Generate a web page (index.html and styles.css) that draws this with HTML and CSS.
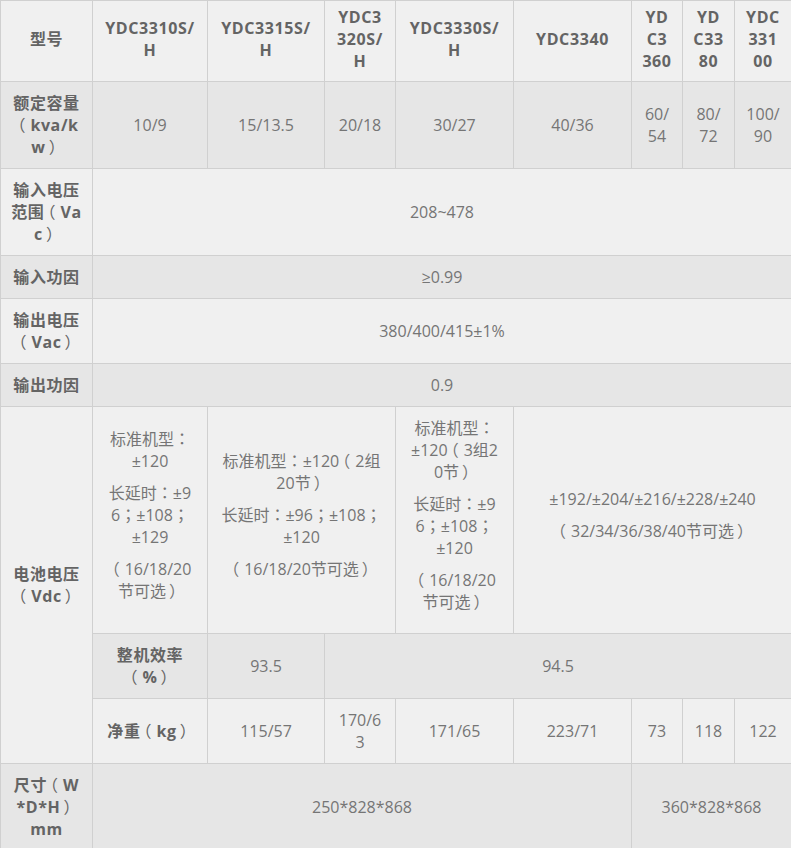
FILE: index.html
```html
<!DOCTYPE html>
<html lang="zh-CN">
<head>
<meta charset="utf-8">
<title>YDC33 系列参数</title>
<link rel="stylesheet" href="styles.css">
</head>
<body>
<table class="spec">
  <colgroup>
    <col class="c0"><col class="c1"><col class="c2"><col class="c3"><col class="c4"><col class="c5"><col class="c6"><col class="c7"><col class="c8">
  </colgroup>
  <tbody>
    <tr class="light rh-head">
      <th>型号</th>
      <th>YDC3310S/<br>H</th>
      <th>YDC3315S/<br>H</th>
      <th>YDC3<br>320S/<br>H</th>
      <th>YDC3330S/<br>H</th>
      <th>YDC3340</th>
      <th>YD<br>C3<br>360</th>
      <th>YD<br>C33<br>80</th>
      <th>YDC<br>331<br>00</th>
    </tr>
    <tr class="dark rh-3">
      <th>额定容量<br><span class="pu op">（</span>kva/k<br>w<span class="pu cp">）</span></th>
      <td>10/9</td>
      <td>15/13.5</td>
      <td>20/18</td>
      <td>30/27</td>
      <td>40/36</td>
      <td>60/<br>54</td>
      <td>80/<br>72</td>
      <td>100/<br>90</td>
    </tr>
    <tr class="light rh-3">
      <th>输入电压<br>范围<span class="pu op">（</span>Va<br>c<span class="pu cp">）</span></th>
      <td colspan="8">208~478</td>
    </tr>
    <tr class="dark rh-1">
      <th>输入功因</th>
      <td colspan="8">≥0.99</td>
    </tr>
    <tr class="light rh-2">
      <th>输出电压<br><span class="pu op">（</span>Vac<span class="pu cp">）</span></th>
      <td colspan="8">380/400/415±1%</td>
    </tr>
    <tr class="dark rh-1">
      <th>输出功因</th>
      <td colspan="8">0.9</td>
    </tr>
    <tr class="light rh-bat">
      <th rowspan="3" class="light">电池电压<br><span class="pu op">（</span>Vdc<span class="pu cp">）</span></th>
      <td>
        <p>标准机型<span class="pu" lang="zh-TW">：</span><br>±120</p>
        <p>长延时<span class="pu" lang="zh-TW">：</span>±9<br>6<span class="pu" lang="zh-TW">；</span>±108<span class="pu" lang="zh-TW">；</span><br>±129</p>
        <p><span class="pu op">（</span>16/18/20<br>节可选<span class="pu cp">）</span></p>
      </td>
      <td colspan="2">
        <p>标准机型<span class="pu" lang="zh-TW">：</span>±120<span class="pu op">（</span>2组<br>20节<span class="pu cp">）</span></p>
        <p>长延时<span class="pu" lang="zh-TW">：</span>±96<span class="pu" lang="zh-TW">；</span>±108<span class="pu" lang="zh-TW">；</span><br>±120</p>
        <p><span class="pu op">（</span>16/18/20节可选<span class="pu cp">）</span></p>
      </td>
      <td>
        <p>标准机型<span class="pu" lang="zh-TW">：</span><br>±120<span class="pu op">（</span>3组2<br>0节<span class="pu cp">）</span></p>
        <p>长延时<span class="pu" lang="zh-TW">：</span>±9<br>6<span class="pu" lang="zh-TW">；</span>±108<span class="pu" lang="zh-TW">；</span><br>±120</p>
        <p><span class="pu op">（</span>16/18/20<br>节可选<span class="pu cp">）</span></p>
      </td>
      <td colspan="4">
        <p>±192/±204/±216/±228/±240</p>
        <p><span class="pu op">（</span>32/34/36/38/40节可选<span class="pu cp">）</span></p>
      </td>
    </tr>
    <tr class="dark rh-2">
      <th>整机效率<br><span class="pu op">（</span>%<span class="pu cp">）</span></th>
      <td>93.5</td>
      <td colspan="6">94.5</td>
    </tr>
    <tr class="light rh-2">
      <th>净重<span class="pu op">（</span>kg<span class="pu cp">）</span></th>
      <td>115/57</td>
      <td>170/6<br>3</td>
      <td>171/65</td>
      <td>223/71</td>
      <td>73</td>
      <td>118</td>
      <td>122</td>
    </tr>
    <tr class="dark rh-3">
      <th>尺寸<span class="pu op">（</span>W<br>*D*H<span class="pu cp">）</span><br>mm</th>
      <td colspan="5">250*828*868</td>
      <td colspan="3">360*828*868</td>
    </tr>
  </tbody>
</table>
</body>
</html>
```
FILE: styles.css
```css
html, body {
  margin: 0;
  padding: 0;
  background: #ffffff;
}

body {
  font-family: "Open Sans", "Noto Sans CJK SC", sans-serif;
  font-size: 16px;
}

.spec {
  border-collapse: collapse;
  table-layout: fixed;
  width: 791px;
}

.c0 { width: 92px; }
.c1 { width: 115px; }
.c2 { width: 117px; }
.c3 { width: 71px; }
.c4 { width: 118px; }
.c5 { width: 118px; }
.c6 { width: 51px; }
.c7 { width: 52px; }
.c8 { width: 57px; }

.spec th,
.spec td {
  border: 1px solid #d0d0d0;
  text-align: center;
  vertical-align: middle;
  padding: 0 2px;
  line-height: 22px;
  white-space: nowrap;
  color: #757575;
  font-weight: normal;
}

.spec th {
  font-weight: bold;
  color: #646464;
  letter-spacing: 0.6px;
}

/* full-width punctuation, drawn centred in its em box */
.pu {
  font-family: "Noto Sans CJK TC", sans-serif;
  font-weight: normal;
  letter-spacing: 0;
  line-height: 16px;
}

/* half-width paren glyphs padded back out to a full em, glyph centred */
.op {
  font-feature-settings: "halt" 1;
  margin-left: 3px;
  margin-right: 5px;
}

.cp {
  font-feature-settings: "halt" 1;
  margin-left: 3px;
  margin-right: 5px;
}

.light { background: #f0f0f0; }
.dark { background: #e6e6e6; }

.rh-head { height: 81px; }
.rh-head th { padding-bottom: 4px; }
.rh-1 { height: 43px; }
.rh-2 { height: 65px; }
.rh-3 { height: 87px; }
.rh-bat { height: 227px; }

.spec p {
  margin: 0 0 10px;
}
```
